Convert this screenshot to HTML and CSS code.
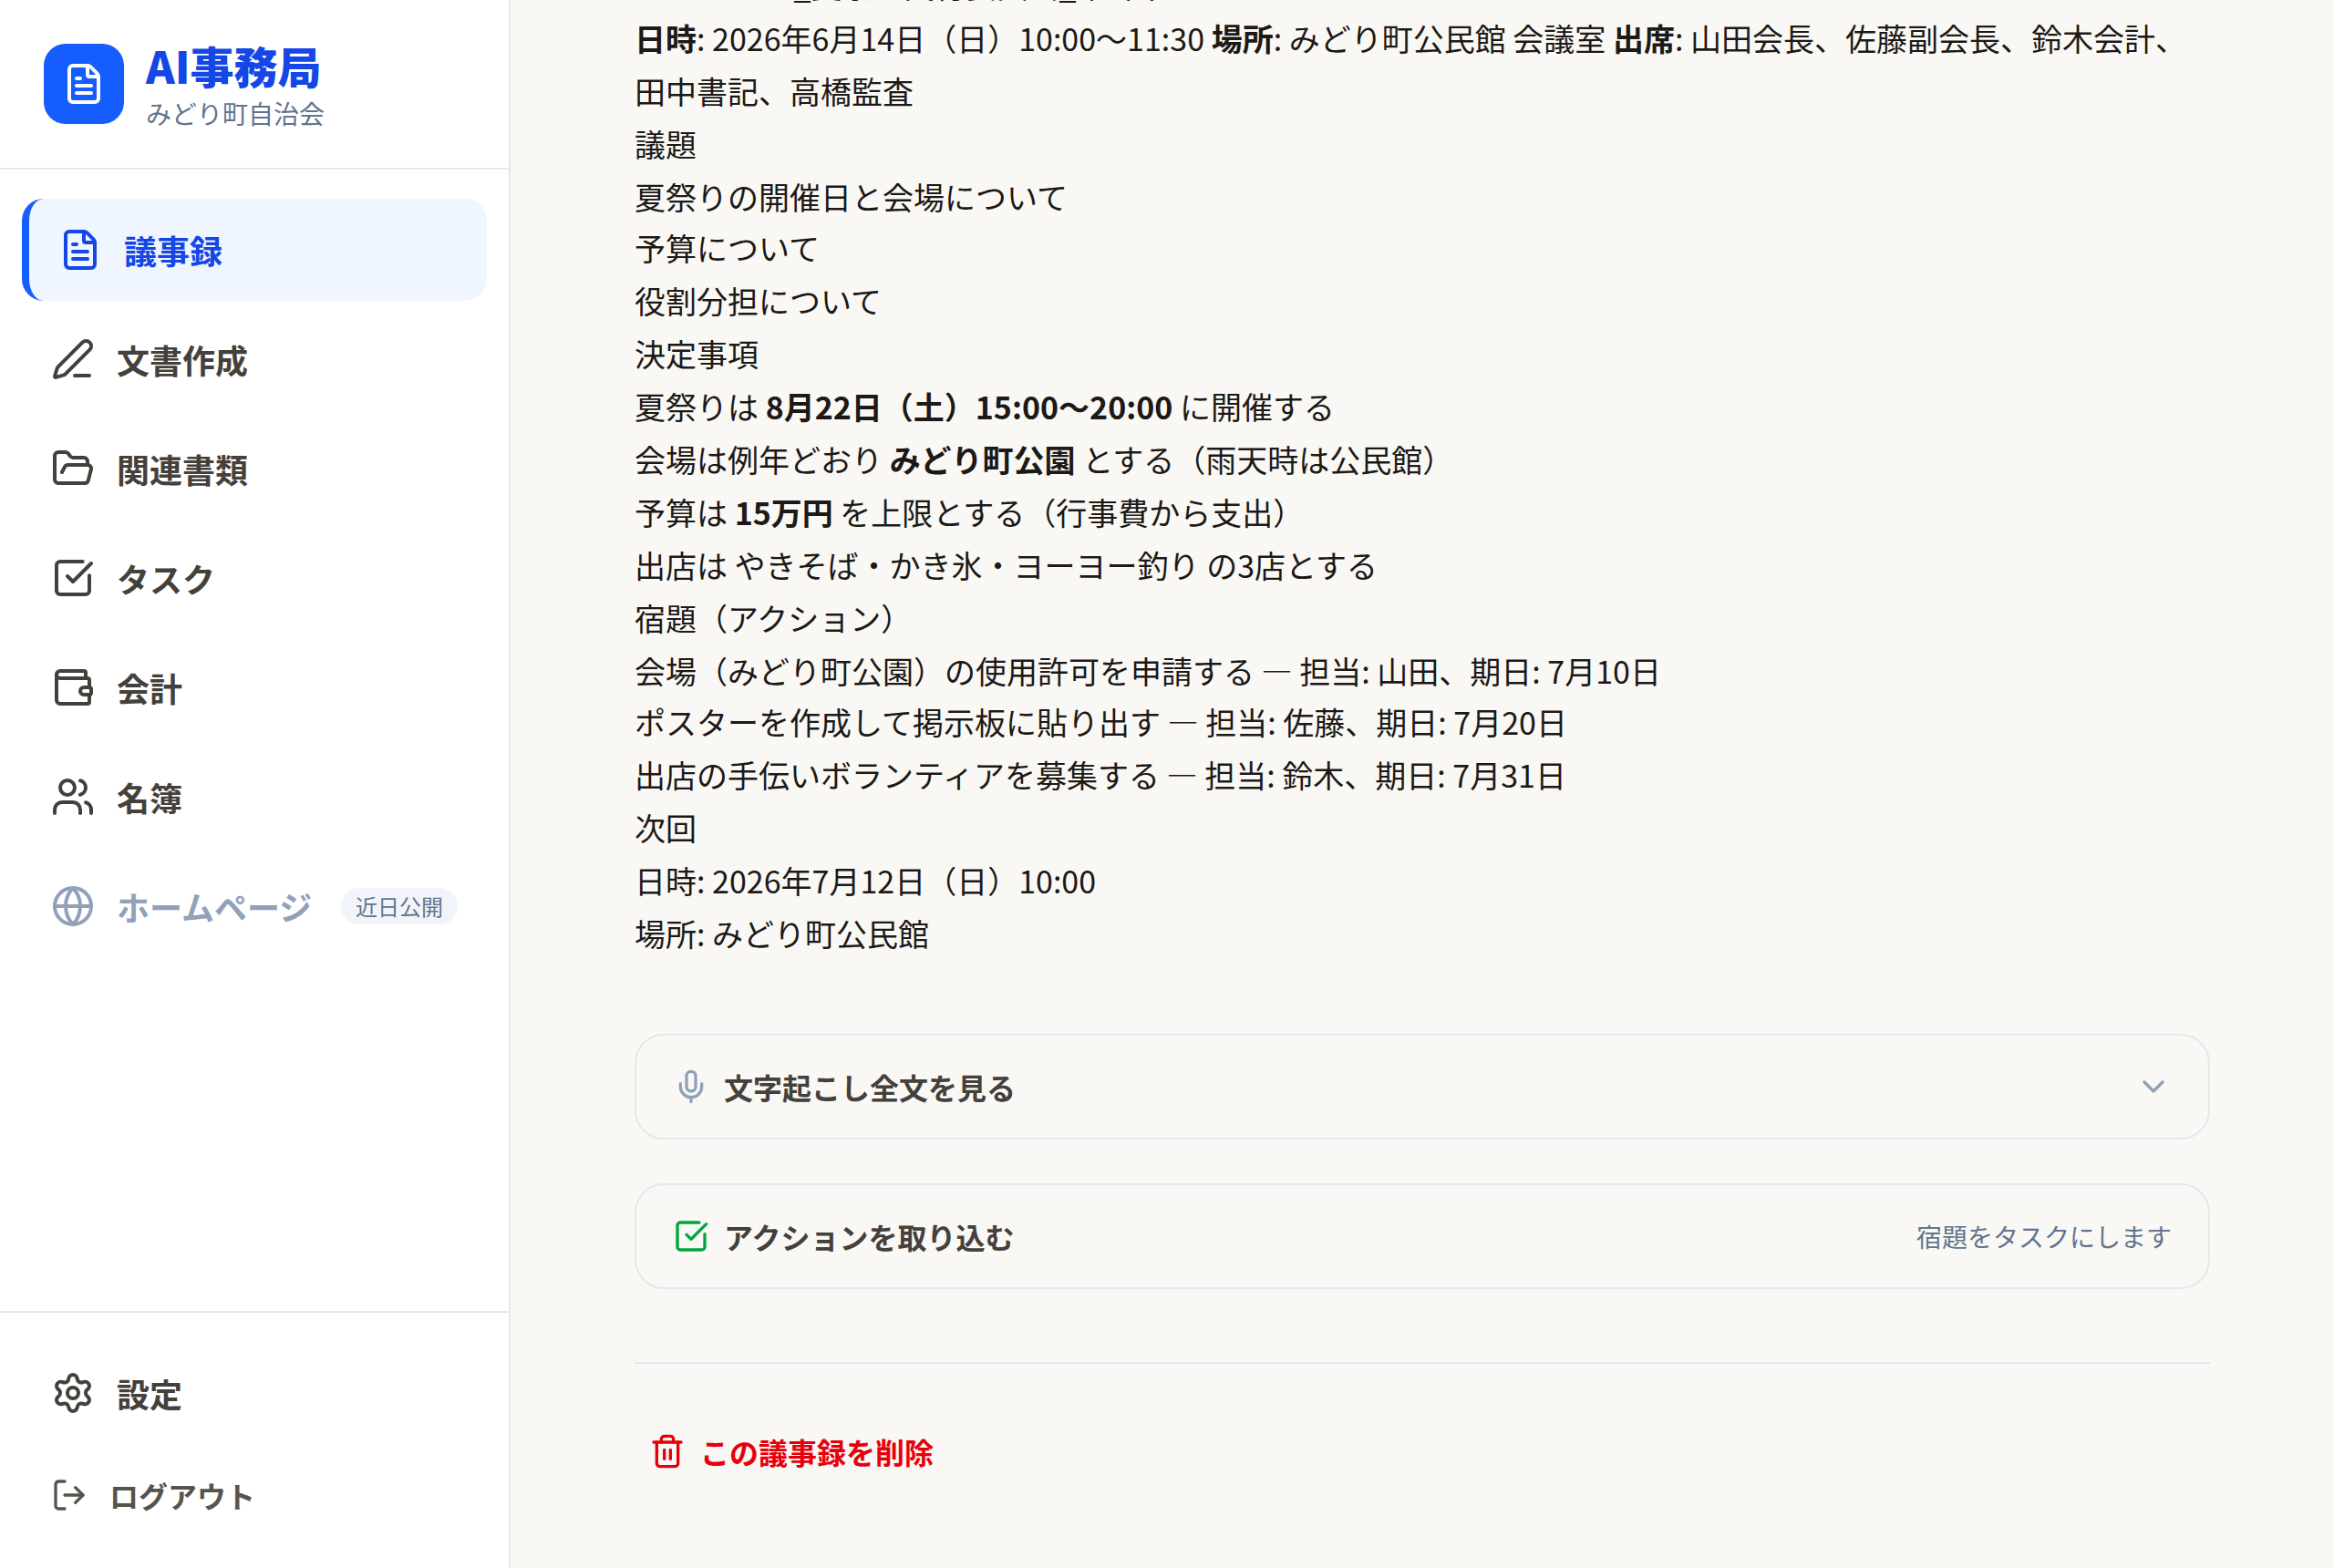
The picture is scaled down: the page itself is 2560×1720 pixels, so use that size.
FILE: index.html
```html
<!DOCTYPE html>
<html lang="ja">
<head>
    <meta charset="UTF-8">
    <meta name="viewport" content="width=device-width, initial-scale=1.0">
    <title>AI事務局</title>
    <link rel="stylesheet" href="styles.css">
</head>
<body>
    <aside class="sidebar">
        <div class="brand">
            <div class="brand-logo">
                <svg class="icon" viewBox="0 0 24 24"><path d="M6 22a2 2 0 0 1-2-2V4a2 2 0 0 1 2-2h8a2.4 2.4 0 0 1 1.704.706l3.588 3.588A2.4 2.4 0 0 1 20 8v12a2 2 0 0 1-2 2z"/><path d="M14 2v5a1 1 0 0 0 1 1h5"/><path d="M10 9H8"/><path d="M16 13H8"/><path d="M16 17H8"/></svg>
            </div>
            <div class="brand-text">
                <div class="brand-name">AI事務局</div>
                <div class="brand-org">みどり町自治会</div>
            </div>
        </div>

        <nav class="nav">
            <a class="nav-item active">
                <svg class="icon" viewBox="0 0 24 24"><path d="M6 22a2 2 0 0 1-2-2V4a2 2 0 0 1 2-2h8a2.4 2.4 0 0 1 1.704.706l3.588 3.588A2.4 2.4 0 0 1 20 8v12a2 2 0 0 1-2 2z"/><path d="M14 2v5a1 1 0 0 0 1 1h5"/><path d="M10 9H8"/><path d="M16 13H8"/><path d="M16 17H8"/></svg>
                <span class="label">議事録</span>
            </a>
            <a class="nav-item">
                <svg class="icon" viewBox="0 0 24 24"><path d="M13 21h8"/><path d="M21.174 6.812a1 1 0 0 0-3.986-3.987L3.842 16.174a2 2 0 0 0-.5.83l-1.321 4.352a.5.5 0 0 0 .623.622l4.353-1.32a2 2 0 0 0 .83-.497z"/></svg>
                <span class="label">文書作成</span>
            </a>
            <a class="nav-item">
                <svg class="icon" viewBox="0 0 24 24"><path d="m6 14 1.5-2.9A2 2 0 0 1 9.24 10H20a2 2 0 0 1 1.94 2.5l-1.54 6a2 2 0 0 1-1.95 1.5H4a2 2 0 0 1-2-2V5a2 2 0 0 1 2-2h3.9a2 2 0 0 1 1.69.9l.81 1.2a2 2 0 0 0 1.67.9H18a2 2 0 0 1 2 2v2"/></svg>
                <span class="label">関連書類</span>
            </a>
            <a class="nav-item">
                <svg class="icon" viewBox="0 0 24 24"><path d="M21 10.656V19a2 2 0 0 1-2 2H5a2 2 0 0 1-2-2V5a2 2 0 0 1 2-2h12.344"/><path d="m9 11 3 3L22 4"/></svg>
                <span class="label">タスク</span>
            </a>
            <a class="nav-item">
                <svg class="icon" viewBox="0 0 24 24"><path d="M19 7V4a1 1 0 0 0-1-1H5a2 2 0 0 0 0 4h15a1 1 0 0 1 1 1v4h-3a2 2 0 0 0 0 4h3a1 1 0 0 0 1-1v-2a1 1 0 0 0-1-1"/><path d="M3 5v14a2 2 0 0 0 2 2h15a1 1 0 0 0 1-1v-4"/></svg>
                <span class="label">会計</span>
            </a>
            <a class="nav-item">
                <svg class="icon" viewBox="0 0 24 24"><path d="M16 21v-2a4 4 0 0 0-4-4H6a4 4 0 0 0-4 4v2"/><path d="M16 3.128a4 4 0 0 1 0 7.744"/><path d="M22 21v-2a4 4 0 0 0-3-3.87"/><circle cx="9" cy="7" r="4"/></svg>
                <span class="label">名簿</span>
            </a>
            <div class="nav-item disabled">
                <svg class="icon" viewBox="0 0 24 24"><circle cx="12" cy="12" r="10"/><path d="M12 2a14.5 14.5 0 0 0 0 20 14.5 14.5 0 0 0 0-20"/><path d="M2 12h20"/></svg>
                <span class="label">ホームページ</span>
                <span class="badge">近日公開</span>
            </div>
        </nav>

        <div class="sidebar-footer">
            <a class="nav-item">
                <svg class="icon" viewBox="0 0 24 24"><path d="M9.671 4.136a2.34 2.34 0 0 1 4.659 0 2.34 2.34 0 0 0 3.319 1.915 2.34 2.34 0 0 1 2.33 4.033 2.34 2.34 0 0 0 0 3.831 2.34 2.34 0 0 1-2.33 4.033 2.34 2.34 0 0 0-3.319 1.915 2.34 2.34 0 0 1-4.659 0 2.34 2.34 0 0 0-3.32-1.915 2.34 2.34 0 0 1-2.33-4.033 2.34 2.34 0 0 0 0-3.831A2.34 2.34 0 0 1 6.35 6.051a2.34 2.34 0 0 0 3.319-1.915"/><circle cx="12" cy="12" r="3"/></svg>
                <span class="label">設定</span>
            </a>
            <a class="nav-item logout">
                <svg class="icon icon-sm" viewBox="0 0 24 24"><path d="m16 17 5-5-5-5"/><path d="M21 12H9"/><path d="M9 21H5a2 2 0 0 1-2-2V5a2 2 0 0 1 2-2h4"/></svg>
                <span>ログアウト</span>
            </a>
        </div>
    </aside>

    <main class="main">
        <div class="content">
            <div class="minutes">
                <p>2026-06-14_夏祭り実行委員会_第1回</p>
                <p><strong>日時</strong>: 2026年6月14日（日）10:00〜11:30 <strong>場所</strong>: みどり町公民館 会議室 <strong>出席</strong>: 山田会長、佐藤副会長、鈴木会計、田中書記、高橋監査</p>
                <p>議題</p>
                <p>夏祭りの開催日と会場について</p>
                <p class="tight">予算について</p>
                <p>役割分担について</p>
                <p>決定事項</p>
                <p>夏祭りは <strong>8月22日（土）15:00〜20:00</strong> に開催する</p>
                <p>会場は例年どおり <strong>みどり町公園</strong> とする（雨天時は公民館）</p>
                <p>予算は <strong>15万円</strong> を上限とする（行事費から支出）</p>
                <p>出店は やきそば・かき氷・ヨーヨー釣り の3店とする</p>
                <p>宿題（アクション）</p>
                <p>会場（みどり町公園）の使用許可を申請する — 担当: 山田、期日: 7月10日</p>
                <p class="tight">ポスターを作成して掲示板に貼り出す — 担当: 佐藤、期日: 7月20日</p>
                <p>出店の手伝いボランティアを募集する — 担当: 鈴木、期日: 7月31日</p>
                <p>次回</p>
                <p>日時: 2026年7月12日（日）10:00</p>
                <p>場所: みどり町公民館</p>
            </div>

            <div class="panel">
                <svg class="icon icon-sm muted" viewBox="0 0 24 24"><path d="M12 19v3"/><path d="M19 10v2a7 7 0 0 1-14 0v-2"/><rect x="9" y="2" width="6" height="13" rx="3"/></svg>
                <span>文字起こし全文を見る</span>
                <svg class="icon icon-sm muted panel-end" viewBox="0 0 24 24"><path d="m6 9 6 6 6-6"/></svg>
            </div>

            <div class="panel">
                <svg class="icon icon-sm green" viewBox="0 0 24 24"><path d="M21 10.656V19a2 2 0 0 1-2 2H5a2 2 0 0 1-2-2V5a2 2 0 0 1 2-2h12.344"/><path d="m9 11 3 3L22 4"/></svg>
                <span>アクションを取り込む</span>
                <span class="panel-hint panel-end">宿題をタスクにします</span>
            </div>

            <div class="danger">
                <button class="delete-button">
                    <svg class="icon icon-sm" viewBox="0 0 24 24"><path d="M10 11v6"/><path d="M14 11v6"/><path d="M19 6v14a2 2 0 0 1-2 2H7a2 2 0 0 1-2-2V6"/><path d="M3 6h18"/><path d="M8 6V4a2 2 0 0 1 2-2h4a2 2 0 0 1 2 2v2"/></svg>
                    <span>この議事録を削除</span>
                </button>
            </div>
        </div>
    </main>
</body>
</html>
```
FILE: styles.css
```css
* {
    box-sizing: border-box;
}

body {
    margin: 0;
    height: 100vh;
    display: flex;
    overflow: hidden;
    font-family: "Noto Sans CJK JP", sans-serif;
    font-size: 34px;
    line-height: 1.7;
    color: #1c1917;
    background-color: #faf8f4;
}

.icon {
    width: 48px;
    height: 48px;
    flex-shrink: 0;
    fill: none;
    stroke: currentColor;
    stroke-width: 2;
    stroke-linecap: round;
    stroke-linejoin: round;
}

.icon-sm {
    width: 40px;
    height: 40px;
}

.muted { color: #90a1b9; }
.green { color: #00a63e; }

/* sidebar */
.sidebar {
    width: 560px;
    flex-shrink: 0;
    display: flex;
    flex-direction: column;
    background-color: #fff;
    border-right: 2px solid #e2e8f0;
}

.brand {
    display: flex;
    align-items: center;
    gap: 24px;
    height: 186px;
    padding: 0 48px;
    border-bottom: 2px solid #e2e8f0;
}

.brand-logo {
    width: 88px;
    height: 88px;
    display: flex;
    align-items: center;
    justify-content: center;
    border-radius: 24px;
    background-color: #155dfc;
    color: #fff;
}

.brand-text {
    padding-top: 4px;
}

.brand-name {
    font-size: 48px;
    font-weight: 900;
    line-height: 60px;
    color: #1447e6;
}

.brand-org {
    font-size: 28px;
    line-height: 46px;
    color: #62748e;
}

.nav {
    flex: 1;
    display: flex;
    flex-direction: column;
    gap: 8px;
    padding: 32px 24px;
}

.nav-item {
    display: flex;
    align-items: center;
    gap: 24px;
    height: 112px;
    padding: 0 32px;
    border-radius: 24px;
    font-size: 36px;
    font-weight: 700;
    color: #44403b;
}

.nav-item.active {
    border-left: 8px solid #155dfc;
    background-color: #eff6ff;
    color: #1447e6;
}

.nav-item.disabled {
    color: #90a1b9;
}

.nav-item.logout {
    height: 96px;
    font-size: 32px;
    color: #57534d;
}

.label {
    padding-top: 2px;
}

.badge {
    margin-left: auto;
    padding: 4px 16px;
    border-radius: 20px;
    background-color: #f1f5f9;
    font-size: 24px;
    font-weight: 400;
    line-height: 32px;
    color: #62748e;
}

.sidebar-footer {
    display: flex;
    flex-direction: column;
    gap: 8px;
    padding: 32px 24px;
    border-top: 2px solid #e2e8f0;
}

/* main column, scrolled to the end */
.main {
    flex: 1;
    display: flex;
    flex-direction: column;
    justify-content: flex-end;
    align-items: center;
    padding-bottom: 80px;
}

.content {
    width: 1728px;
}

.minutes {
    margin-bottom: 81.5px;
    line-height: 58px;
}

.minutes p {
    margin: 0;
}

.minutes .tight {
    margin-top: -2px;
}

.panel {
    display: flex;
    align-items: center;
    gap: 16px;
    height: 116px;
    margin-bottom: 48px;
    padding: 0 40px;
    border: 2px solid #e2e8f0;
    border-radius: 32px;
    font-size: 32px;
    font-weight: 700;
    color: #44403b;
}

.panel-end {
    margin-left: auto;
}

.panel-hint {
    padding-top: 2px;
    font-size: 28px;
    font-weight: 400;
    color: #62748e;
}

.danger {
    margin-top: 80px;
    padding-top: 48px;
    border-top: 2px solid #e2e8f0;
}

.delete-button {
    display: flex;
    align-items: center;
    gap: 16px;
    height: 96px;
    padding: 0 16px;
    border: none;
    background: none;
    font-family: inherit;
    font-size: 32px;
    font-weight: 700;
    color: #e7000b;
}
```
